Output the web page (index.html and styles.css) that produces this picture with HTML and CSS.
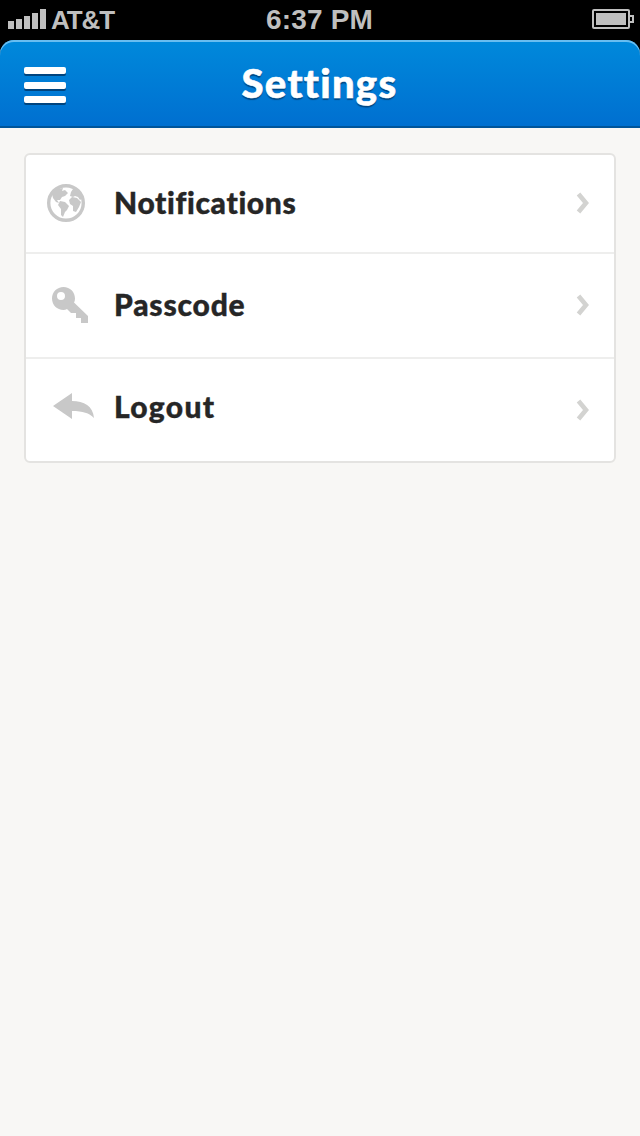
FILE: index.html
```html
<!DOCTYPE html>
<html lang="en">
<head>
<meta charset="utf-8">
<title>Settings</title>
<link rel="stylesheet" href="styles.css">
</head>
<body>
<div class="status">
  <div class="carrier">
    <svg class="signal" width="38" height="21" viewBox="0 0 38 21"><path d="M0 12h6v8H0zM8 10h6v10H8zM16 7h6v13h-6zM24 4h6v16h-6zM32 0h6v20h-6z" fill="#bfbfbf"/></svg>
    <span class="carrier-name">AT&amp;T</span>
  </div>
  <span class="time">6:37 PM</span>
  <svg class="battery" width="42" height="20" viewBox="0 0 42 20"><rect x="1" y="1" width="36" height="18" rx="1" fill="none" stroke="#bfbfbf" stroke-width="2"/><rect x="4" y="4" width="30" height="12" fill="#bfbfbf"/><path d="M38 7h3v6h-3" fill="none" stroke="#bfbfbf" stroke-width="2"/></svg>
</div>
<div class="header-wrap">
  <header class="header">
    <div class="menu"><i class="bar"></i><i class="bar"></i><i class="bar"></i></div>
    <h1 class="title">Settings</h1>
    <div class="spacer"></div>
  </header>
</div>
<main class="card">
  <div class="row notifications">
    <svg class="icon" width="48" height="40" viewBox="0 0 48 40"><circle cx="20" cy="20" r="17.3" fill="none" stroke="#c8c8c8" stroke-width="3.4"/><path fill="#c8c8c8" d="M6 11l5-5 6-1-1 3 3-1 3 3-3 3-3 1-2 3-3 0 2 3-3-1-3-4zM14 18l5 1 4 4-2 4-2 2-2 5-2-2 0-6-3-4zM25 9l2-3 4 0 4 4 2 5-3 2-2-3-3-1-2 1-3-1zM23 17l3-3 5 1 4 4-2 5-3 5-3-1 0-5-3-2z"/></svg>
    <span class="label">Notifications</span>
    <svg class="chevron" width="14" height="24" viewBox="0 0 14 24"><path d="M2.500 3L10 12L2.500 21" fill="none" stroke="#d3d3d1" stroke-width="4.600"/></svg>
  </div>
  <div class="row passcode">
    <svg class="icon" width="48" height="40" viewBox="0 0 48 40"><path fill="#c8c8c8" fill-rule="evenodd" d="M17.500 2C24 2 29 7 29 13.500Q29 15.500 28 17.500L42 31v7h-7v-5h-5v-5h-5l-4-4Q19.500 25 17.500 25C11 25 6 20 6 13.500S11 2 17.500 2zM15 7a4 4 0 1 0 0 8a4 4 0 0 0 0-8z"/></svg>
    <span class="label">Passcode</span>
    <svg class="chevron" width="14" height="24" viewBox="0 0 14 24"><path d="M2.500 3L10 12L2.500 21" fill="none" stroke="#d3d3d1" stroke-width="4.600"/></svg>
  </div>
  <div class="row logout">
    <svg class="icon" width="48" height="40" viewBox="0 0 48 40"><path fill="#c8c8c8" d="M7 20L26 7v8C38 15 47 20 48 32C43 27 37 25 26 25v8z"/></svg>
    <span class="label">Logout</span>
    <svg class="chevron" width="14" height="24" viewBox="0 0 14 24"><path d="M2.500 3L10 12L2.500 21" fill="none" stroke="#d3d3d1" stroke-width="4.600"/></svg>
  </div>
</main>
</body>
</html>
```
FILE: styles.css
```css
* { box-sizing: border-box; }
body { margin: 0; min-height: 1136px; background: #f8f7f5; font-family: Lato, sans-serif; font-variant-ligatures: none; }
.status { height: 40px; background: #000; color: #bfbfbf; font: bold 28px/39px "Liberation Sans", sans-serif; display: grid; grid-template-columns: 1fr auto 1fr; padding: 0 6px 0 8px; }
.carrier { display: flex; gap: 5px; }
.signal { margin-top: 9px; }
.carrier-name { font-size: 26px; line-height: 40px; letter-spacing: -1.1px; }
.time { letter-spacing: 0.2px; margin: 0 3px 0 0; }
.battery { margin-top: 9px; justify-self: end; }
.header-wrap { background: #000; }
.header { height: 88px; border-radius: 14px 14px 0 0; background: linear-gradient(#0089db, #006fd0); box-shadow: inset 0 2px 0 #69bdf0, inset 0 -2px 0 #00559a; display: flex; align-items: center; padding: 0 24px; }
.menu { width: 42px; display: flex; flex-direction: column; gap: 7.4px; padding-top: 2px; }
.bar { height: 7px; border-radius: 2px; background: #fff; box-shadow: 0 2px 0 #00447e; }
.title { flex: 1; margin: -2px 0 0; text-align: center; color: #fff; font-size: 40px; line-height: 48px; font-weight: 900; letter-spacing: 1.3px; -webkit-text-stroke: 0.6px #fff; text-shadow: 0 2px 1px #004783; }
.spacer { width: 43px; }
.card { margin: 25px 24px 0; height: 310px; border: 2px solid #e4e3e1; border-radius: 6px; background: #fff; }
.row { display: flex; align-items: center; padding: 0 24px 0 20px; }
.notifications { height: 99px; border-bottom: 2px solid #eeeeed; padding-bottom: 1px; }
.passcode { height: 105px; border-bottom: 2px solid #eeeeed; padding-bottom: 2px; }
.logout { height: 102px; }
.label { flex: 1; margin: -2px 0 0 20px; font-size: 30px; line-height: 36px; font-weight: 900; letter-spacing: 0.65px; -webkit-text-stroke: 0.4px #262626; color: #262626; }
.passcode .label { letter-spacing: 0.8px; }
.logout .label { margin-top: -8px; letter-spacing: 1.3px; }
.logout .icon { margin-top: -8px; }
```
